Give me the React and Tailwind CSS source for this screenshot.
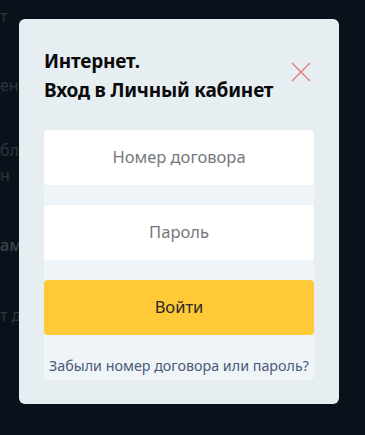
export default function App() {
  return (
    <div className="relative w-[365px] h-[435px] overflow-hidden bg-[#0b111a]" style={{ fontFamily: '"Noto Sans", "Open Sans", sans-serif' }}>
      <div className="flex flex-col text-[#2f353e] text-[16px] leading-[20px] pt-[6px]">
        <div>т</div>
        <div className="mt-[49px]">ени</div>
        <div className="mt-[45px]">бл</div>
        <div className="mt-[5px]">н</div>
        <div className="mt-[50px] font-semibold text-[#3a4048]">ама</div>
        <div className="mt-[50px]">т д</div>
      </div>
      <div className="absolute left-[19px] top-[19px] w-[320px] h-[385px] rounded-[6px] bg-[#e6eef2] px-[25px] pt-[28px]">
        <div className="flex items-start justify-between">
          <h2 className="text-[19px] leading-[29px] font-bold text-[#0a0a0a] tracking-[-0.2px]">
            Интернет.<br />Вход в Личный кабинет
          </h2>
          <button className="mt-[15px] mr-[3px] w-[20px] h-[20px] flex items-center justify-center">
            <svg width="20" height="20" viewBox="0 0 20 20" fill="none" stroke="#ec7680" strokeWidth="1.4">
              <path d="M1 1L19 19M19 1L1 19" />
            </svg>
          </button>
        </div>
        <div className="mt-[25px] bg-[#eef4f7] rounded-[4px] flex flex-col gap-[20px]">
          <div className="h-[55px] rounded-[4px] bg-white flex items-center justify-center text-[16.5px] text-[#74787e]">Номер договора</div>
          <div className="h-[55px] rounded-[4px] bg-white flex items-center justify-center text-[16.5px] text-[#74787e]">Пароль</div>
          <div className="h-[55px] rounded-[4px] bg-[#ffc937] flex items-center justify-center text-[16.5px] text-[#2a2a2a]">Войти</div>
        </div>
        <div className="bg-[#eef4f7] rounded-b-[4px] h-[45px] pt-[16px] flex items-center justify-center text-[14.3px] text-[#4a5a78]">Забыли номер договора или пароль?</div>
      </div>
    </div>
  );
}
